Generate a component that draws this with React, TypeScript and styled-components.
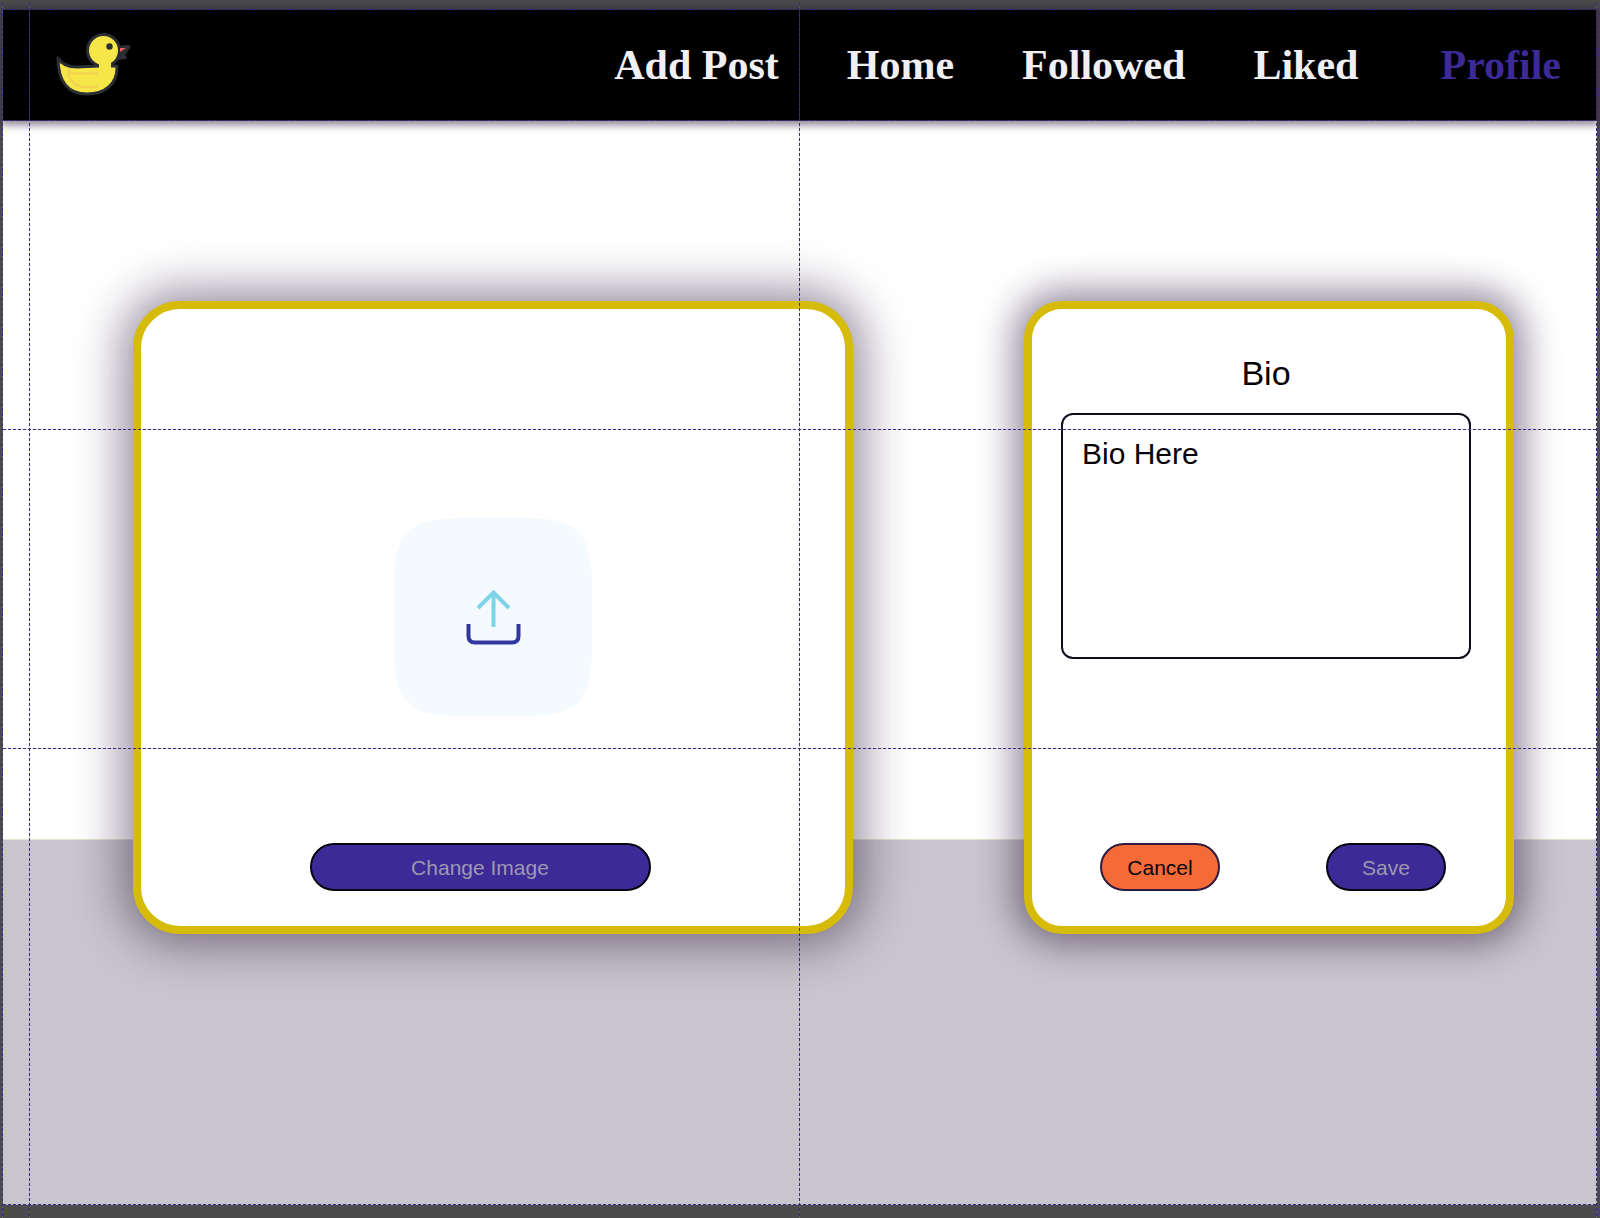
import React from "react";
import styled, { createGlobalStyle } from "styled-components";

const GlobalStyle = createGlobalStyle`
  *, *::before, *::after { box-sizing: border-box; }
  body {
    margin: 0;
    background: #4b4b4b;
    font-family: "Liberation Sans", Arial, sans-serif;
    color: #05020a;
  }
`;

const Canvas = styled.div`
  position: relative;
  display: flex;
  min-height: 100vh;
  padding: 9px 3px 13px;
`;

const Page = styled.div`
  flex: 1;
  display: flex;
  flex-direction: column;
  background: linear-gradient(#fff 0 830px, #e6e1d2 830px 831px, #c8c5cc 831px);
`;

const Header = styled.header`
  display: flex;
  align-items: center;
  justify-content: space-between;
  height: 112px;
  padding: 0 36px 0 52px;
  background: #000;
  box-shadow: 0 2px 8px 2px rgba(30, 8, 46, 0.5);
`;

const Logo = styled.a`
  display: flex;
  svg { width: 76px; height: 64px; }
`;

const Nav = styled.nav`
  display: flex;
  gap: 68px;
`;

const NavLink = styled.a<{ $active?: boolean }>`
  font: bold 42px/52px "Liberation Serif", "Times New Roman", serif;
  text-decoration: none;
  white-space: nowrap;
  color: ${(p) => (p.$active ? "#3c2a96" : "#f0eff4")};
  margin-left: ${(p) => (p.$active ? "14px" : "0")};
`;

const Main = styled.main`
  display: grid;
  grid-template-columns: 720fr 490fr;
  column-gap: 171px;
  padding: 180px 83px 0 130px;
`;

const Card = styled.section<{ $radius: number; $blur: number }>`
  display: flex;
  flex-direction: column;
  align-items: stretch;
  height: 633px;
  border: 8px solid #d7bb09;
  border-radius: ${(p) => p.$radius}px;
  background: #fff;
  box-shadow: 0 0 ${(p) => p.$blur}px 10px rgba(30, 8, 46, 0.48);
`;

const ImageCard = styled(Card)`
  justify-content: space-between;
  padding: 209px 0 35px;
`;

const BioCard = styled(Card)`
  padding: 44px 35px 35px 29px;
`;

const UploadTile = styled.label`
  display: flex;
  align-self: center;
  cursor: pointer;
  svg { width: 198px; height: 198px; }
`;

const FileInput = styled.input`
  position: absolute;
  width: 1px;
  height: 1px;
  opacity: 0;
`;

const BioLabel = styled.label`
  font-size: 34px;
  line-height: 40px;
  text-align: center;
`;

const BioText = styled.textarea`
  display: block;
  height: 246px;
  margin-top: 20px;
  padding: 20px 19px;
  border: 2px solid #120b1d;
  border-radius: 12px;
  background: transparent;
  color: inherit;
  font: 30px/38px "Liberation Sans", Arial, sans-serif;
  resize: none;
  outline: none;
`;

const ImageActions = styled.div`
  display: flex;
  justify-content: center;
  padding-right: 26px;
`;

const Actions = styled.div`
  display: flex;
  justify-content: space-between;
  margin-top: auto;
  padding: 0 25px 0 39px;
`;

const Button = styled.button<{ $wide?: boolean; $tone?: "cancel" }>`
  width: ${(p) => (p.$wide ? "341px" : "120px")};
  height: 48px;
  padding: 2px 0 0;
  border: 2px solid ${(p) => (p.$tone ? "#2f1b3f" : "#08040f")};
  border-radius: 24px;
  background: ${(p) => (p.$tone ? "#f56b38" : "#3c2a96")};
  color: ${(p) => (p.$tone ? "#05020a" : "#9d99b0")};
  font: 21px/24px "Liberation Sans", Arial, sans-serif;
  cursor: pointer;
`;

const Guides = styled.div`
  position: absolute;
  inset: 0;
  pointer-events: none;
`;

const GuideRow = styled.i<{ $at: string }>`
  position: absolute;
  top: ${(p) => p.$at};
  left: 3px;
  right: 3px;
  height: 1px;
  background: repeating-linear-gradient(90deg, #3c2a86 0 3px, rgba(150, 145, 160, 0.3) 3px 5px);
`;

const GuideColumn = styled.i<{ $at: string }>`
  position: absolute;
  left: ${(p) => p.$at};
  top: 3px;
  bottom: 0;
  width: 1px;
  background: repeating-linear-gradient(#3c2a86 0 3px, rgba(150, 145, 160, 0.3) 3px 5px);
`;

const links = ["Add Post", "Home", "Followed", "Liked", "Profile"];
const rows = ["9px", "120px", "429px", "748px", "calc(100% - 14px)"];
const columns = ["2px", "29px", "calc(50% - 1px)", "calc(100% - 4px)"];

const Duck = () => (
  <svg viewBox="0 0 76 64" aria-hidden="true">
    <path d="M62 13L73 12Q77 12 75 15L70 22Q73 23 71 26L63 27L59 31L58 20Z" fill="#2b2e33" />
    <path d="M3 25Q8 34 22 34L44 33H62V35C62 50 51 61 32 61C12 61 3 47 3 25Z" fill="#f7e648" stroke="#2b2e33" strokeWidth="3" strokeLinejoin="round" />
    <circle cx="48.500" cy="17.500" r="16" fill="#f7e648" stroke="#2b2e33" strokeWidth="3" />
    <path d="M44 30H56V37H44Z" fill="#f7e648" />
    <path d="M65 15H71L65 19Z" fill="#e8605c" />
    <circle cx="54.500" cy="13.500" r="3.200" fill="#2b2e33" />
    <path d="M43 40.500H20Q12 39 13 36Q14 54 32 54.500L43 53.500" fill="none" stroke="#f4d452" strokeWidth="2.500" />
  </svg>
);

const UploadIcon = () => (
  <svg viewBox="0 0 198 198" aria-hidden="true">
    <path d="M0 66C0 15 15 0 66 0H132C183 0 198 15 198 66V132C198 183 183 198 132 198H66C15 198 0 183 0 132Z" fill="#f4fafd" />
    <path d="M99.500 109V74M84 90L99.500 74.500L115 90" fill="none" stroke="#7dd3e8" strokeWidth="4" />
    <path d="M74.500 106V118Q74.500 124.500 81 124.500H118Q124.500 124.500 124.500 118V106" fill="none" stroke="#3237a0" strokeWidth="4" />
  </svg>
);

export default function App() {
  return (
    <>
      <GlobalStyle />
      <Canvas>
        <Page>
          <Header>
            <Logo href="#" aria-label="Duck"><Duck /></Logo>
            <Nav>
              {links.map((name) => (
                <NavLink key={name} href="#" $active={name === "Profile"}>{name}</NavLink>
              ))}
            </Nav>
          </Header>
          <Main>
            <ImageCard $radius={47} $blur={48}>
              <UploadTile aria-label="Upload image">
                <FileInput type="file" />
                <UploadIcon />
              </UploadTile>
              <ImageActions>
                <Button type="button" $wide>Change Image</Button>
              </ImageActions>
            </ImageCard>
            <BioCard $radius={38} $blur={36}>
              <BioLabel htmlFor="bio">Bio</BioLabel>
              <BioText id="bio" defaultValue="Bio Here" />
              <Actions>
                <Button type="button" $tone="cancel">Cancel</Button>
                <Button type="button">Save</Button>
              </Actions>
            </BioCard>
          </Main>
        </Page>
        <Guides>
          {rows.map((at) => <GuideRow key={at} $at={at} />)}
          {columns.map((at) => <GuideColumn key={at} $at={at} />)}
        </Guides>
      </Canvas>
    </>
  );
}
